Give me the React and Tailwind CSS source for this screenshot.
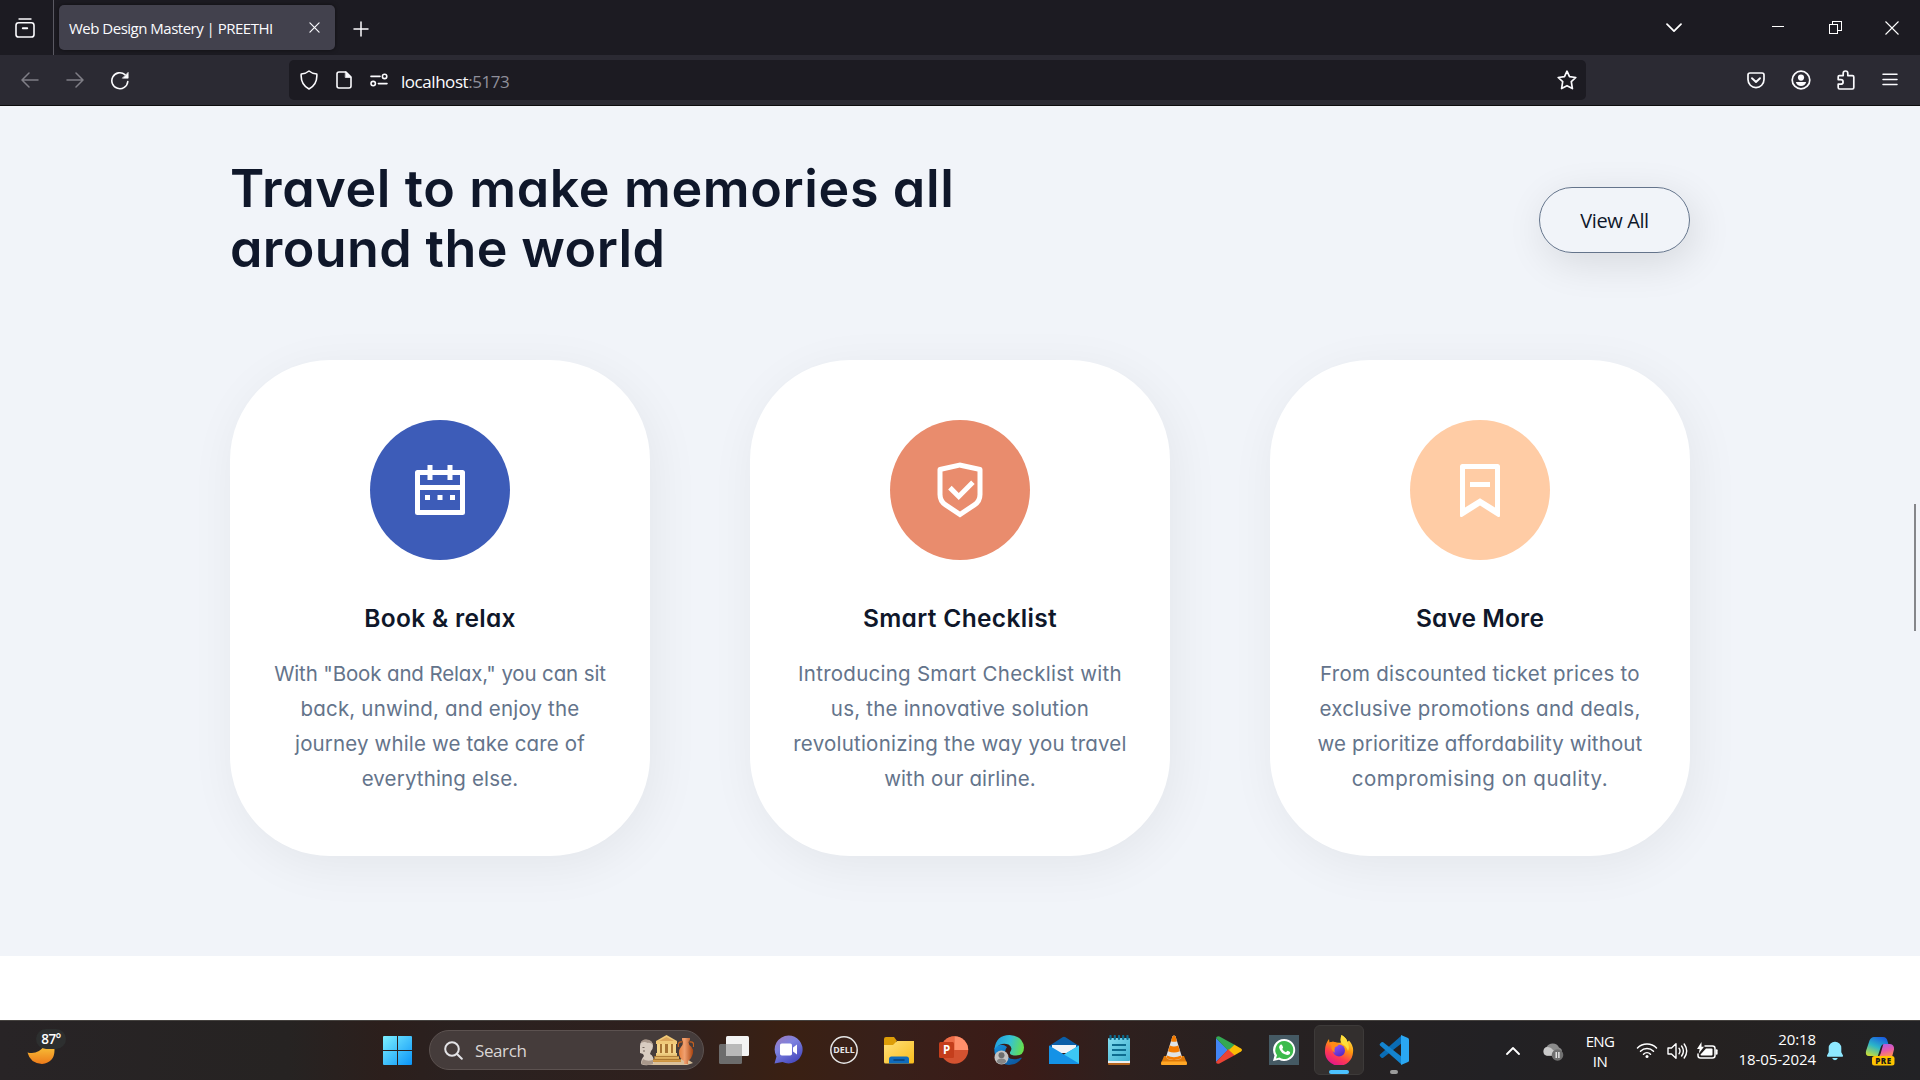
import React from "react";

const stroke = { fill: "none", stroke: "currentColor", strokeLinecap: "round", strokeLinejoin: "round" };

/* ---------- browser chrome ---------- */

function ViewIcon() {
  return (
    <svg className="h-5 w-5" viewBox="0 0 20 20" {...stroke} strokeWidth="1.6">
      <path d="M4 1h12" strokeWidth="1.4" />
      <rect x="1" y="4.8" width="18" height="14.2" rx="2.6" />
      <path d="M7.800 10.200h4.400" strokeWidth="2" />
    </svg>
  );
}

function TabStrip() {
  return (
    <div className="flex h-[55px] bg-[#1c1b22]">
      <div className="flex w-[54px] items-center border-r border-[#5a5962] pl-[15px] text-[#fbfbfe]">
        <ViewIcon />
      </div>
      <div className="mt-[5px] ml-[5px] flex h-[45px] w-[276px] items-center rounded-[5px] bg-[#42414d] pr-[15px] pl-[10px] shadow-[0_0_4px_rgba(0,0,0,0.5)]">
        <span className="mt-px flex-1 text-[15px] leading-[20px] tracking-[-0.5px] whitespace-nowrap text-[#fbfbfe]">
          Web Design Mastery | PREETHI
        </span>
        <svg className="h-[11px] w-[11px] text-[#fbfbfe]" viewBox="0 0 12 12" {...stroke} strokeWidth="1.3">
          <path d="M1 1l10 10M11 1L1 11" />
        </svg>
      </div>
      <div className="flex flex-1 items-center pl-[18px] text-[#fbfbfe]">
        <svg className="mt-[2px] h-4 w-4" viewBox="0 0 16 16" {...stroke} strokeWidth="1.5">
          <path d="M8 1v14M1 8h14" />
        </svg>
      </div>
      <div className="flex items-center pr-[21px] text-white">
        <svg className="mr-[90px] h-4 w-4" viewBox="0 0 16 16" {...stroke} strokeWidth="1.7">
          <path d="M1 4.2l7 7 7-7" />
        </svg>
        <svg className="mr-[45px] h-3 w-3" viewBox="0 0 12 12" shapeRendering="crispEdges">
          <rect y="4" width="12" height="1" fill="currentColor" />
        </svg>
        <svg className="mr-[43px] h-[13px] w-[13px]" viewBox="0 0 13 13" fill="none" stroke="currentColor" shapeRendering="crispEdges">
          <rect x="0.5" y="3.5" width="8" height="9" />
          <path d="M3.5 3.5v-3h9v9h-4" />
        </svg>
        <svg className="h-[14px] w-[14px]" viewBox="0 0 14 14" fill="none" stroke="currentColor" strokeWidth="1.1">
          <path d="M0.5 0.5l13 13M13.5 0.5l-13 13" />
        </svg>
      </div>
    </div>
  );
}

function Toolbar() {
  return (
    <div className="flex h-[51px] items-start border-b border-[#0c0c0d] bg-[#2b2a33] pt-[5px] text-[#fbfbfe]">
      <div className="flex h-10 w-[289px] items-center pl-[21px]">
        <svg className="h-[18px] w-[18px] text-[#7f7e86]" viewBox="0 0 18 18" {...stroke} strokeWidth="1.5">
          <path d="M17 9H1.2M8 2L1 9l7 7" />
        </svg>
        <svg className="ml-[27px] h-[18px] w-[18px] text-[#7f7e86]" viewBox="0 0 18 18" {...stroke} strokeWidth="1.5">
          <path d="M1 9h15.8M10 2l7 7-7 7" />
        </svg>
        <svg className="ml-[27px] h-[19px] w-[18px]" viewBox="0 0 18 19" {...stroke} strokeWidth="1.6">
          <path d="M16.8 10.5A8 8 0 1 1 14 3.6" />
          <path d="M17.2 1.6v5.600h-5.600z" fill="currentColor" strokeWidth="0.6" />
        </svg>
      </div>
      <div className="flex h-10 w-[1297px] items-center rounded-[5px] bg-[#1c1b22] pr-[9px] pl-[11px]">
        <svg className="h-5 w-[18px]" viewBox="0 0 18 20" {...stroke} strokeWidth="1.6">
          <path d="M9 1Q12 3.6 16.8 4Q17.6 14.5 9 19Q0.4 14.5 1.2 4Q6 3.6 9 1z" />
        </svg>
        <svg className="ml-[18px] h-[18px] w-4" viewBox="0 0 16 18" {...stroke} strokeWidth="1.6">
          <path d="M3 1h7l5 5v9q0 2-2 2H3q-2 0-2-2V3q0-2 2-2z" />
          <path d="M9.6 1l5.4 5.4H9.6z" fill="currentColor" strokeWidth="0.8" />
        </svg>
        <svg className="ml-[18px] h-[14px] w-[18px]" viewBox="0 0 18 14" {...stroke} strokeWidth="1.6">
          <path d="M1 3.4h9M8.4 10.6H17" />
          <circle cx="14.6" cy="3.4" r="2.2" />
          <circle cx="3.2" cy="10.6" r="2.2" />
        </svg>
        <span className="mt-[3px] ml-[13px] flex-1 text-[17px] tracking-[-0.45px]">
          localhost<span className="text-[#8f8f9a]">:5173</span>
        </span>
        <svg className="h-5 w-5" viewBox="0 0 20 20" {...stroke} strokeWidth="1.7">
          <path d="M10 1.2l2.5 5.4 6.3.9-4.5 4.2 1.1 6.9-5.4-2.9-5.4 2.9 1.1-6.9L1.2 7.5l6.3-.9z" />
        </svg>
      </div>
      <div className="flex h-10 flex-1 items-center justify-end pr-[22px]">
        <svg className="h-[17px] w-[18px]" viewBox="0 0 18 17" {...stroke} strokeWidth="1.7">
          <path d="M3 1h12q2 0 2 2v4.6a8 8 0 0 1-16 0V3q0-2 2-2z" />
          <path d="M5 6.2l4 3.8 4-3.8" strokeWidth="1.9" />
        </svg>
        <svg className="ml-[26px] h-5 w-5" viewBox="0 0 20 20" {...stroke} strokeWidth="1.7">
          <circle cx="10" cy="10" r="8.8" />
          <circle cx="10" cy="7.6" r="3.1" fill="currentColor" stroke="none" />
          <path d="M4.8 12h10.4q-1.2 4-5.2 4t-5.2-4z" fill="currentColor" stroke="none" />
        </svg>
        <svg className="ml-[26px] h-5 w-[18px]" viewBox="0 0 18 20" {...stroke} strokeWidth="1.7">
          <path d="M1.2 9V6.8q0-1.2 1.2-1.2h3.8V3.3a2.3 2.3 0 0 1 4.6 0v2.3h4.6q1.4 0 1.4 1.4v10.6q0 1.4-1.4 1.4H2.6q-1.4 0-1.4-1.4v-3.4h2.6a2.2 2.2 0 0 0 0-4.6H1.2z" />
        </svg>
        <svg className="ml-[27px] h-4 w-4" viewBox="0 0 16 16" {...stroke} strokeWidth="1.5">
          <path d="M1 2.2h14M1 7.4h14M1 12.6h14" />
        </svg>
      </div>
    </div>
  );
}

/* ---------- page ---------- */

const CalendarIcon = () => (
  <svg className="h-[60px] w-[60px]" viewBox="0 0 24 24" fill="white">
    <path d="M9 2v2h6V2h2v2h4a1 1 0 0 1 1 1v16a1 1 0 0 1-1 1H3a1 1 0 0 1-1-1V5a1 1 0 0 1 1-1h4V2h2zm11 10H4v8h16v-8zM8 14v2H6v-2h2zm5 0v2h-2v-2h2zm5 0v2h-2v-2h2zM7 6H4v4h16V6h-3v2h-2V6H9v2H7V6z" />
  </svg>
);
const ShieldIcon = () => (
  <svg className="h-[60px] w-[60px]" viewBox="0 0 24 24" fill="white">
    <path d="M12 1l8.217 1.826a1 1 0 0 1 .783.976v9.987a6 6 0 0 1-2.672 4.992L12 23l-6.328-4.219A6 6 0 0 1 3 13.79V3.802a1 1 0 0 1 .783-.976L12 1zm0 2.049L5 4.604v9.185a4 4 0 0 0 1.781 3.328L12 20.597l5.219-3.48A4 4 0 0 0 19 13.79V4.604L12 3.05zm4.452 5.173l1.415 1.414L11.503 16 7.26 11.757l1.414-1.414 2.828 2.828 4.95-4.95z" />
  </svg>
);
const BookmarkIcon = () => (
  <svg className="h-[60px] w-[60px]" viewBox="0 0 24 24" fill="white">
    <path d="M5 1.6h14a1 1 0 0 1 1 1v19.743a.5.5 0 0 1-.766.424L12 18.23l-7.234 4.536A.5.5 0 0 1 4 22.343V2.6a1 1 0 0 1 1-1zm13 2H6v15.432l6-3.761 6 3.761V3.6zM8 8.8h8v2H8v-2z" />
  </svg>
);

const cards = [
  {
    title: "Book & relax",
    titleClass: "tracking-[0.3px]",
    circle: "bg-[#3d5cb8]",
    icon: <CalendarIcon />,
    lines: [
      ['With "Book and Relax," you can sit', "tracking-[-0.14px]"],
      ["back, unwind, and enjoy the", "tracking-[0.18px]"],
      ["journey while we take care of", "tracking-[0.14px]"],
      ["everything else.", "tracking-[0.15px]"],
    ],
  },
  {
    title: "Smart Checklist",
    titleClass: "tracking-[0.35px]",
    circle: "bg-[#e98c6d]",
    icon: <ShieldIcon />,
    lines: [
      ["Introducing Smart Checklist with", "tracking-[0.25px]"],
      ["us, the innovative solution", "tracking-[0.21px]"],
      ["revolutionizing the way you travel", "tracking-[0.22px]"],
      ["with our airline.", "tracking-[0.12px]"],
    ],
  },
  {
    title: "Save More",
    titleClass: "tracking-[0.12px]",
    circle: "bg-[#ffcca5]",
    icon: <BookmarkIcon />,
    lines: [
      ["From discounted ticket prices to", "tracking-[0.26px]"],
      ["exclusive promotions and deals,", "tracking-[0.28px]"],
      ["we prioritize affordability without", "tracking-[0.14px]"],
      ["compromising on quality.", "tracking-[0.5px]"],
    ],
  },
];

function Card({ title, titleClass, circle, icon, lines }) {
  return (
    <div className="flex h-[496px] w-[420px] flex-col items-center rounded-[100px] bg-white pt-[60px] shadow-[5px_10px_50px_rgba(0,0,0,0.06)]">
      <div className={`flex h-[140px] w-[140px] items-center justify-center rounded-full ${circle}`}>{icon}</div>
      <h3 className={`mt-10 text-[24.5px] leading-9 font-semibold text-[#0f172a] ${titleClass}`}>{title}</h3>
      <p className="mt-5 text-center text-[20.5px] leading-[35px] text-[#64748b]">
        {lines.map(([text, cls]) => (
          <span key={text} className={`block whitespace-nowrap ${cls}`}>{text}</span>
        ))}
      </p>
    </div>
  );
}

function Page() {
  return (
    <main className="flex h-[914px] bg-white">
      <section className="h-[850px] flex-1 bg-[#f1f4f9] pt-[53px] pl-[230px] font-['Inter','Liberation_Sans',sans-serif] [font-feature-settings:'cv11']">
        <div className="flex h-[120px] w-[1460px] items-center justify-between">
          <h2 className="text-[52px] leading-[60px] font-semibold whitespace-nowrap text-[#0f172a]">
            <span className="block tracking-[0.63px]">Travel to make memories all</span>
            <span className="block tracking-[0.4px]">around the world</span>
          </h2>
          <button className="mt-[2px] h-[66px] w-[151px] rounded-[36px] border border-[#64748b] pt-[2px] font-['Open_Sans',sans-serif] text-xl tracking-[-0.38px] text-[#0f172a] shadow-[5px_10px_40px_rgba(0,0,0,0.11)]">
            View All
          </button>
        </div>
        <div className="mt-[81px] flex w-[1460px] justify-between">
          {cards.map((c) => (
            <Card key={c.title} {...c} />
          ))}
        </div>
      </section>
      <div className="flex h-[850px] w-[6px] flex-col bg-[#f1f4f9] pt-[398px]">
        <div className="h-[127px] w-[2px] bg-[#85868a]" />
      </div>
    </main>
  );
}

/* ---------- taskbar icons ---------- */

const Decoration = () => (
  <svg className="h-8 w-[55px]" viewBox="0 0 55 32">
    <defs>
      <linearGradient id="vase" x1="0" x2="1"><stop offset="0" stopColor="#e8813c" /><stop offset="0.4" stopColor="#f0a070" /><stop offset="1" stopColor="#a8430f" /></linearGradient>
      <linearGradient id="gold" x1="0" y1="0" x2="0" y2="1"><stop offset="0" stopColor="#f3d48a" /><stop offset="1" stopColor="#c98f3c" /></linearGradient>
    </defs>
    <path d="M6 30l6-5h36l6 4-6 2H8z" fill="#d9c09a" />
    <path d="M1 12q0-6 6-6 7 0 7 6 0 3-2 5l-1 3q4 2 4 9-7 4-13 1 0-5 3-8l-1-2-3-1z" fill="#d8ccc0" />
    <path d="M2 9q1-4 6-3.600 5 .6 5.600 5-2-2-5-1.400-3-2-6.600 0zM4 25q4 3 10 1v4q-5 2-12 0z" fill="#a9988b" />
    <path d="M3.500 13.500h2M4 17h2" stroke="#75675e" strokeWidth="1" />
    <path d="M17 7L27.500 1 38 7v3H17z" fill="#f0c978" />
    <path d="M20 7l7.500-4L35 7z" fill="#dba55a" />
    <path d="M18 10h19v9H18z" fill="#a87434" />
    <path d="M18 10h3v9h-3zM23 10h3v9h-3zM29 10h3v9h-3zM34 10h3v9h-3z" fill="#f3d48a" />
    <path d="M17 19h21v3H17zM15.500 22H40v3H15.500zM14 25h28v3H14z" fill="url(#gold)" />
    <path d="M15 22.500h25M14 25.500h28" stroke="#9a6424" strokeWidth="0.7" />
    <path d="M43 4h8v2l-1.500 2q0 3 3 5 2 2 1.500 6-1 5-5 8v3h-4v-3q-5-3-5-8 0-4 2-6 2-2 2-5L43 6z" fill="url(#vase)" />
    <path d="M43.500 8q-5-1-4 5M50.500 8q5-1 4 5" fill="none" stroke="#c4601f" strokeWidth="1.3" />
  </svg>
);

const TaskView = () => (
  <svg className="h-[30px] w-[30px]" viewBox="0 0 30 30">
    <rect x="0" y="9" width="23" height="20" rx="1.5" fill="#6c6c6c" />
    <rect x="7" y="1" width="23" height="20" rx="1.5" fill="#f3f3f3" />
    <path d="M7 9h16v12H8.500Q7 21 7 19.500z" fill="#b9b9b9" />
  </svg>
);
const Chat = () => (
  <svg className="h-[30px] w-[30px]" viewBox="0 0 30 30">
    <defs><linearGradient id="chat" x1="0" y1="0" x2="0.6" y2="1"><stop offset="0" stopColor="#a17ab8" /><stop offset="0.45" stopColor="#7d82e0" /><stop offset="1" stopColor="#4a4cc0" /></linearGradient></defs>
    <path d="M14.500 0.500a14 14 0 1 1-6 26.600L0.500 28.500 2.500 21.500A14 14 0 0 1 14.500 .5z" fill="url(#chat)" />
    <rect x="6" y="8.500" width="12" height="12" rx="1.800" fill="#fff" />
    <path d="M19 12.500l4-3v10l-4-3z" fill="#fff" />
  </svg>
);
const Dell = () => (
  <svg className="h-[30px] w-[30px]" viewBox="0 0 30 30">
    <circle cx="15" cy="15" r="13.200" fill="none" stroke="#e6e6e6" strokeWidth="1.500" />
    <text x="15" y="18.400" textAnchor="middle" textLength="21.500" lengthAdjust="spacingAndGlyphs" fontSize="9.500" fontWeight="700" fill="#e6e6e6">DELL</text>
  </svg>
);
const Folder = () => (
  <svg className="h-[30px] w-[30px]" viewBox="0 0 30 30">
    <defs><linearGradient id="fold" x1="0" y1="0" x2="1" y2="1"><stop offset="0" stopColor="#ffe07a" /><stop offset="1" stopColor="#f9bd1c" /></linearGradient></defs>
    <path d="M0 4q0-2 2-2h8l3 4h-1v4H0z" fill="#dd9d07" />
    <path d="M0 10h9l4-4h17v21q0 1.500-1.500 1.500h-27Q0 28.500 0 27z" fill="url(#fold)" />
    <path d="M5 28.500V24q0-2.500 2.500-2.500h15Q25 21.500 25 24v4.500z" fill="#0f6cbd" />
    <path d="M10 25h10" stroke="#0a3f74" strokeWidth="1.500" strokeLinecap="round" />
  </svg>
);
const PowerPoint = () => (
  <svg className="h-[30px] w-[30px]" viewBox="0 0 30 30">
    <circle cx="15.500" cy="15" r="13.700" fill="#d35230" />
    <path d="M15.500 1.300A13.700 13.700 0 0 0 1.800 15H15.500z" fill="#ed6c47" />
    <path d="M15.500 1.300A13.700 13.700 0 0 1 29.200 15H15.500z" fill="#ff8f6b" />
    <rect x="0" y="7" width="15" height="16" rx="1.500" fill="#c43e1c" />
    <text x="7.500" y="19" textAnchor="middle" fontSize="11.500" fontWeight="700" fill="#fff">P</text>
  </svg>
);
const Edge = () => (
  <svg className="h-[30px] w-[30px]" viewBox="0 0 30 30">
    <defs>
      <linearGradient id="edgeA" x1="0" y1="0.300" x2="1" y2="0.500"><stop offset="0" stopColor="#1f9de0" /><stop offset="0.500" stopColor="#35c1d6" /><stop offset="1" stopColor="#66e04c" /></linearGradient>
      <linearGradient id="edgeB" x1="0" y1="0" x2="1" y2="1"><stop offset="0" stopColor="#1490df" /><stop offset="1" stopColor="#0c4f94" /></linearGradient>
    </defs>
    <path d="M0.500 13A15 15 0 0 0 15 30q8 0 12.500-6.500.5-1.200-.8-.8-8 3.500-13.200-1Q9 17 13 12 7 7 0.500 13z" fill="url(#edgeB)" />
    <path d="M0.500 14Q2 0 15.500 0 29 1 30 12.500q0 8-8 8-5 0-6-2-.4-1 .8-2.500 2-4-2.300-6.500Q7 6.500 0.500 14z" fill="url(#edgeA)" />
    <circle cx="7.500" cy="22.500" r="7" fill="#c3c3c3" />
    <circle cx="7.500" cy="20.200" r="3" fill="#6e6e6e" />
    <path d="M2.800 27q0-3.500 4.700-3.500t4.700 3.500q-4.700 4-9.400 0z" fill="#858585" />
  </svg>
);
const Mail = () => (
  <svg className="h-[30px] w-[30px]" viewBox="0 0 30 30">
    <path d="M0 11L13.500 2.200q1.500-1 3 0L30 11v4H0z" fill="#0a5ea8" />
    <path d="M3 10h24v8H3z" fill="#f1f3f7" />
    <path d="M0 10.500l15 9 15-9V29H0z" fill="#1492e6" />
    <path d="M30 10.500V28.500L15 19.500z" fill="#3cc8f5" />
  </svg>
);
const Notepad = () => (
  <svg className="h-[30px] w-[24px]" viewBox="0 0 24 30">
    <defs><linearGradient id="note" x1="0" y1="0" x2="1" y2="1"><stop offset="0" stopColor="#83dcf0" /><stop offset="1" stopColor="#3fb1d0" /></linearGradient></defs>
    <rect x="1" y="26" width="22" height="4" rx="1" fill="#b5651d" />
    <rect x="1" y="25" width="22" height="3" fill="#eee" />
    <rect x="1" y="3" width="22" height="23" rx="1" fill="url(#note)" />
    <path d="M3.500 1v3M7.800 1v3M12 1v3M16.200 1v3M20.500 1v3" stroke="#0c6b8e" strokeWidth="2.200" strokeLinecap="round" />
    <path d="M5 10h14M5 15h14M5 20h14" stroke="#0e6c8f" strokeWidth="1.800" />
  </svg>
);
const Vlc = () => (
  <svg className="h-[30px] w-[28px]" viewBox="0 0 28 30">
    <path d="M4 21h20l3 7.500q0 1.500-1.500 1.500h-23Q1 30 1 28.500z" fill="#e07a08" />
    <path d="M1.500 26.500h25l.5 2q0 1.500-1.500 1.500h-23Q1 30 1 28.500z" fill="#ffa726" />
    <path d="M12.400 1.500q1.600-2 3.200 0L22 22q-1 3-8 3t-8-3z" fill="#dfe3e6" />
    <path d="M12.400 1.500q1.600-2 3.200 0L17 6.200q-3 1.300-6 0zM9.800 10.500q4.200 2 8.400 0l1.700 5.700q-5.900 2.600-11.800 0zM7 20.500q7 3.500 14 0l.8 2.500q-7.800 4-15.600 0z" fill="#f47b00" />
  </svg>
);
const Play = () => (
  <svg className="h-[30px] w-[28px]" viewBox="0 0 28 30">
    <path d="M1 3v24l12-12z" fill="#4285f4" />
    <path d="M1 3q.6-2.500 3.500-1.600L20 10l-6.500 6z" fill="#34a853" />
    <path d="M1 27q.6 2.500 3.500 1.600L20 20l-6.500-6z" fill="#ea4335" />
    <path d="M19.500 9.800l6.500 3.700q2 1.500 0 3l-6.500 3.700-5.700-5.200z" fill="#fbbc04" />
  </svg>
);
const WhatsApp = () => (
  <svg className="h-[30px] w-[30px]" viewBox="0 0 30 30">
    <rect width="30" height="30" fill="#455a64" />
    <path d="M15 4a11 11 0 1 1-5 20.700L4 26l1.500-5.500A11 11 0 0 1 15 4z" fill="#fff" />
    <path d="M15.200 6a9 9 0 1 1-4.700 16.600L7 23.500l1-3.300A9 9 0 0 1 15.200 6z" fill="#3dbb4c" />
    <path d="M11.400 9.800q1.400-.6 1.900.6l.8 1.900q.1.600-.9 1.600 1.300 2.300 3.700 3.300l1.300-1.300q.5-.3 1 0l1.900 1q.4 2.800-3 3-6.500-1-8-7.400-.1-1.700 1.300-2.700z" fill="#fff" />
  </svg>
);
const Firefox = () => (
  <svg className="h-[30px] w-[30px]" viewBox="0 0 30 30">
    <defs>
      <linearGradient id="fx" x1="0.800" y1="0" x2="0.300" y2="1"><stop offset="0" stopColor="#fff04a" /><stop offset="0.400" stopColor="#ff980e" /><stop offset="0.700" stopColor="#ff3b4f" /><stop offset="1" stopColor="#e01490" /></linearGradient>
      <linearGradient id="fxg" x1="0" y1="0" x2="0.500" y2="1"><stop offset="0" stopColor="#9059ff" /><stop offset="1" stopColor="#5b2bc4" /></linearGradient>
    </defs>
    <path d="M17.500 0q5 3 6 7l1.500-1.500q5 5.500 4 12A14 14 0 0 1 1 16Q.8 9 5 4l.5 3.500Q9 6 12 7.500q3 .2 5 .1Q16 4 17.500 0z" fill="url(#fx)" />
    <circle cx="15" cy="15.500" r="6" fill="url(#fxg)" />
    <path d="M5.500 7.500q4-1.500 6.500 0l3 1.500q-1 2.700-4 3.200-1 2.500-.2 5.500-4-3-3.300-6.500z" fill="#ff8a16" />
    <path d="M17.500 0q5 3 6 7 2.500 5 .5 9-1.500-5-6-7Q15.500 5 17.500 0z" fill="#ffde3b" />
  </svg>
);
const VsCode = () => (
  <svg className="h-[30px] w-[30px]" viewBox="0 0 30 30">
    <path d="M22 1L1 19.500q-.8.900 0 1.700l1.500 1.500q.8.600 1.700 0L23 8z" fill="#0a6cb5" />
    <path d="M22 29L1 10.500q-.8-.9 0-1.700l1.500-1.500q.8-.6 1.700 0L23 22z" fill="#1484cf" />
    <path d="M22 0l7 3q1 .5 1 1.600v20.800q0 1.100-1 1.600l-7 3z" fill="#2aa7f2" />
  </svg>
);

const apps = [TaskView, Chat, Dell, Folder, PowerPoint, Edge, Mail, Notepad, Vlc, Play, WhatsApp];

function Taskbar() {
  return (
    <footer className="flex h-[60px] border-t border-[#45423f] bg-[linear-gradient(90deg,#282426_0%,#262322_15%,#2c1f1c_20%,#2a2120_24%,#2f201d_35%,#3a2013_41%,#38201a_46%,#3b1b17_53%,#2f201e_58%,#272121_65%,#222124_78%,#252120_88%,#222225_100%)] text-white">
      <div className="flex w-[383px] items-start pt-2 pl-[26px]">
        <svg className="mt-[12px] h-[24px] w-[30px]" viewBox="0 0 30 24">
          <defs><linearGradient id="moon" x1="0" y1="0" x2="0" y2="1"><stop offset="0" stopColor="#f8c53a" /><stop offset="1" stopColor="#ee7b1a" /></linearGradient></defs>
          <path d="M1.500 11.500Q12 14 18 5l10-1q3 17-12 19Q4 22 1.500 11.500z" fill="url(#moon)" />
        </svg>
        <span className="z-10 -ml-5 flex h-5 w-[30px] items-center justify-center rounded-full bg-[#2d2f2f] pt-px text-[13.5px] font-semibold tracking-[-0.6px]">87°</span>
      </div>
      <svg className="mt-[15px] h-[29px] w-[29px]" viewBox="0 0 29 29">
        <defs><linearGradient id="win" x1="0" y1="0" x2="1" y2="1"><stop offset="0" stopColor="#7cf0ff" /><stop offset="1" stopColor="#0a94f8" /></linearGradient></defs>
        <path d="M0 1q0-1 1-1h13v14H0zM15 0h13q1 0 1 1v13H15zM0 15h14v14H1q-1 0-1-1zM15 15h14v13q0 1-1 1H15z" fill="url(#win)" />
      </svg>
      <div className="mt-[9px] ml-[17px] flex h-10 w-[275px] items-center rounded-full border border-[#5c5250] bg-[#453c3b] pr-[9px] pl-[14px]">
        <svg className="h-[19px] w-[19px] text-[#e3e3e6]" viewBox="0 0 19 19" {...stroke} strokeWidth="2">
          <circle cx="8" cy="8" r="6.800" />
          <path d="M13 13l4.800 4.800" />
        </svg>
        <span className="mt-px ml-[12px] flex-1 text-[17px] leading-5 tracking-[-0.4px] text-[#dad6d5]">Search</span>
        <Decoration />
      </div>
      <div className="ml-[2px] flex">
        {apps.map((Icon, i) => (
          <div key={i} className="flex w-[55px] items-center justify-center pb-px">
            <Icon />
          </div>
        ))}
        <div className="mt-1 mr-[2px] ml-[3px] flex h-[50px] w-[50px] flex-col items-center rounded-md border border-[#3d3a39] bg-[#332f2e] pt-[9px]">
          <Firefox />
          <span className="mt-[5px] h-1 w-5 rounded-full bg-[#4cc2ff]" />
        </div>
        <div className="flex w-[55px] flex-col items-center pt-[14px]">
          <VsCode />
          <span className="mt-[5px] h-1 w-2 rounded-full bg-[#9b9b9b]" />
        </div>
      </div>
      <div className="flex flex-1 items-center justify-end pr-[25px]">
        <svg className="h-[14px] w-[14px]" viewBox="0 0 14 14" {...stroke} strokeWidth="1.800">
          <path d="M1 10l6-6 6 6" />
        </svg>
        <svg className="mt-[3px] ml-[22px] h-[18px] w-[22px]" viewBox="0 0 22 18">
          <path d="M5 12.500a4.500 4.500 0 0 1-.5-8.500A7 7 0 0 1 17 4.500q3 1 3 4l-6 4z" fill="#8b8b8b" />
          <path d="M5 12.800a4.500 4.500 0 0 1 0-8.800q4 0 6 3l3 2-3 3.800z" fill="#c9c9c9" />
          <circle cx="15.500" cy="12" r="5.800" fill="#707070" />
          <path d="M14.200 9v6M16.900 9v6" stroke="#fff" strokeWidth="1.200" />
        </svg>
        <div className="ml-[18px] w-[36px] text-center text-[15px] leading-5 tracking-[-0.6px]">
          ENG
          <br />
          IN
        </div>
        <svg className="ml-[18px] h-[17px] w-[22px]" viewBox="0 0 22 17" {...stroke} strokeWidth="1.500">
          <path d="M1.500 6a13.500 13.500 0 0 1 19 0M4.500 9.200a9.300 9.300 0 0 1 13 0M7.500 12.200a5 5 0 0 1 7 0" />
          <circle cx="11" cy="14.600" r="1.500" fill="currentColor" stroke="none" />
        </svg>
        <svg className="ml-[9px] h-[18px] w-[21px]" viewBox="0 0 21 18" {...stroke} strokeWidth="1.400">
          <path d="M1 6h3.500L9 1.800v14.400L4.500 12H1z" />
          <path d="M12 6.200q2 2.800 0 5.600M14.600 4q3.600 5 0 10M17.200 2q5 7 0 14" />
        </svg>
        <svg className="ml-[8px] h-[18px] w-[22px]" viewBox="0 0 22 18" {...stroke} strokeWidth="1.500">
          <path d="M9 4h7.500q2.500 0 2.500 2.500v7q0 2.500-2.500 2.500h-12Q2 16 2 13.500V12" />
          <path d="M10 6.500h5.500q1 0 1 1v5q0 1-1 1h-10q-1 0-1-1z" fill="currentColor" stroke="none" />
          <path d="M20.600 8.200v3.600" strokeWidth="2" />
          <path d="M5.500 0L1 7h2.600L2.800 11.500 8 4.800H5.500z" fill="currentColor" stroke="none" />
        </svg>
        <div className="-mt-[3px] ml-[10px] w-[88px] text-right text-[15px] leading-5 tracking-[-0.08px]">
          20:18
          <br />
          18-05-2024
        </div>
        <svg className="ml-[10px] h-5 w-[18px]" viewBox="0 0 18 20" fill="#8ee8ff">
          <path d="M9 .8a6.200 6.200 0 0 1 6.300 6.200v4.200l1.700 3.300q.3 1.200-.9 1.200H1.900q-1.200 0-.9-1.200l1.700-3.300V7A6.200 6.200 0 0 1 9 .8zM6.200 17h5.600a2.900 2.900 0 0 1-5.600 0z" />
        </svg>
        <svg className="ml-[21px] h-[30px] w-[30px]" viewBox="0 0 30 30">
          <defs>
            <linearGradient id="cpA" x1="0.700" y1="0" x2="0.200" y2="1"><stop offset="0" stopColor="#1a5fe0" /><stop offset="0.500" stopColor="#2bb5c9" /><stop offset="1" stopColor="#c6dd3a" /></linearGradient>
            <linearGradient id="cpB" x1="0" y1="0" x2="0.300" y2="1"><stop offset="0" stopColor="#a45cf0" /><stop offset="0.600" stopColor="#e85aa8" /><stop offset="1" stopColor="#ff8a5c" /></linearGradient>
          </defs>
          <path d="M9 1h9q3.500 0 4.500 4l.8 3h-3.500q-3 0-4 3l-3 9H4Q0 20 1 15L4.500 4.500Q6 1 9 1z" fill="url(#cpA)" />
          <path d="M18.500 8H25q4.500.5 4 5.500L27 21H12.500q2.500-1 3-3l2-7q.5-2.500 1-3z" fill="url(#cpB)" />
          <rect x="7" y="20" width="22.500" height="9.500" rx="2.500" fill="#ffc400" />
          <text x="18.500" y="27.700" textAnchor="middle" fontSize="8" fontWeight="800" letterSpacing="0.600" fill="#1b1a19">PRE</text>
        </svg>
      </div>
    </footer>
  );
}

export default function App() {
  return (
    <div className="flex h-[1080px] w-[1920px] flex-col overflow-hidden font-['Open_Sans','Noto_Sans',sans-serif]">
      <TabStrip />
      <Toolbar />
      <Page />
      <Taskbar />
    </div>
  );
}
